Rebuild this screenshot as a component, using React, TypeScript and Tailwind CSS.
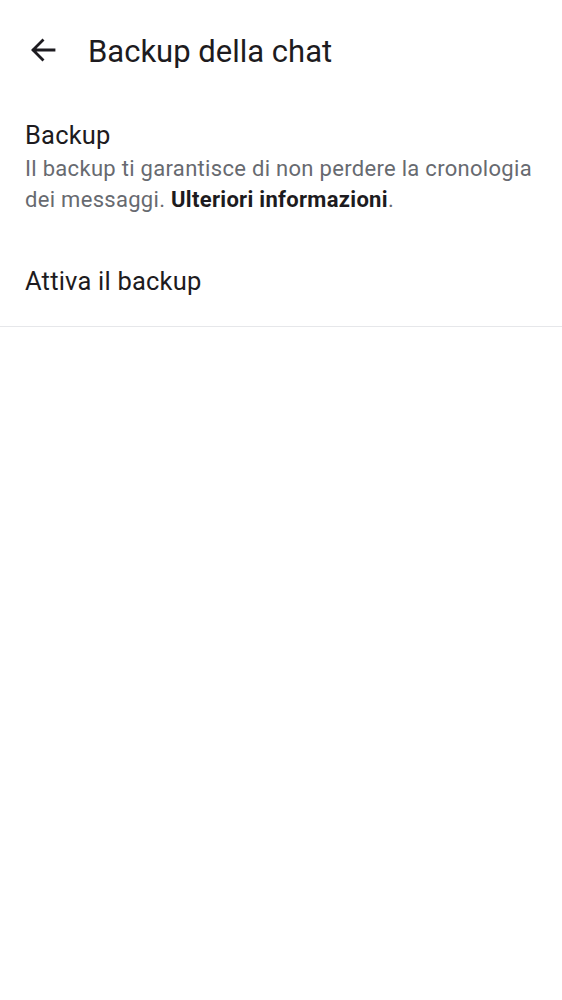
import React from 'react';

const BackArrow: React.FC = () => (
  <svg width="26" height="24" viewBox="0 0 26 24" fill="none" className="text-[#1d1b20]">
    <path
      d="M24 12H3.5M12.5 2.5L3 12l9.5 9.5"
      stroke="currentColor"
      strokeWidth="2.8"
      strokeLinecap="square"
    />
  </svg>
);

const App: React.FC = () => {
  return (
    <div className="min-h-screen bg-white font-['Roboto',sans-serif] text-[#1d1b20]">
      <header className="flex items-center h-[100px] pl-[30px]">
        <button className="flex items-center">
          <BackArrow />
        </button>
        <h1 className="ml-[32px] mt-[2px] text-[31px] leading-none">Backup della chat</h1>
      </header>

      <section className="px-[25px] pt-[20px]">
        <h2 className="text-[25.5px] leading-[30px] tracking-[0.2px]">Backup</h2>
        <p className="mt-[3px] text-[22px] leading-[31px] tracking-[0.3px] text-[#676a70]">
          Il backup ti garantisce di non perdere la cronologia dei messaggi.{' '}
          <span className="font-bold text-[#1d1b20]">Ulteriori informazioni</span>.
        </p>
      </section>

      <div className="px-[25px] pt-[51px] pb-[30px] border-b border-[#e6e7ea]">
        <span className="block text-[25.5px] leading-[30px] tracking-[0.2px]">Attiva il backup</span>
      </div>
    </div>
  );
};

export default App;
